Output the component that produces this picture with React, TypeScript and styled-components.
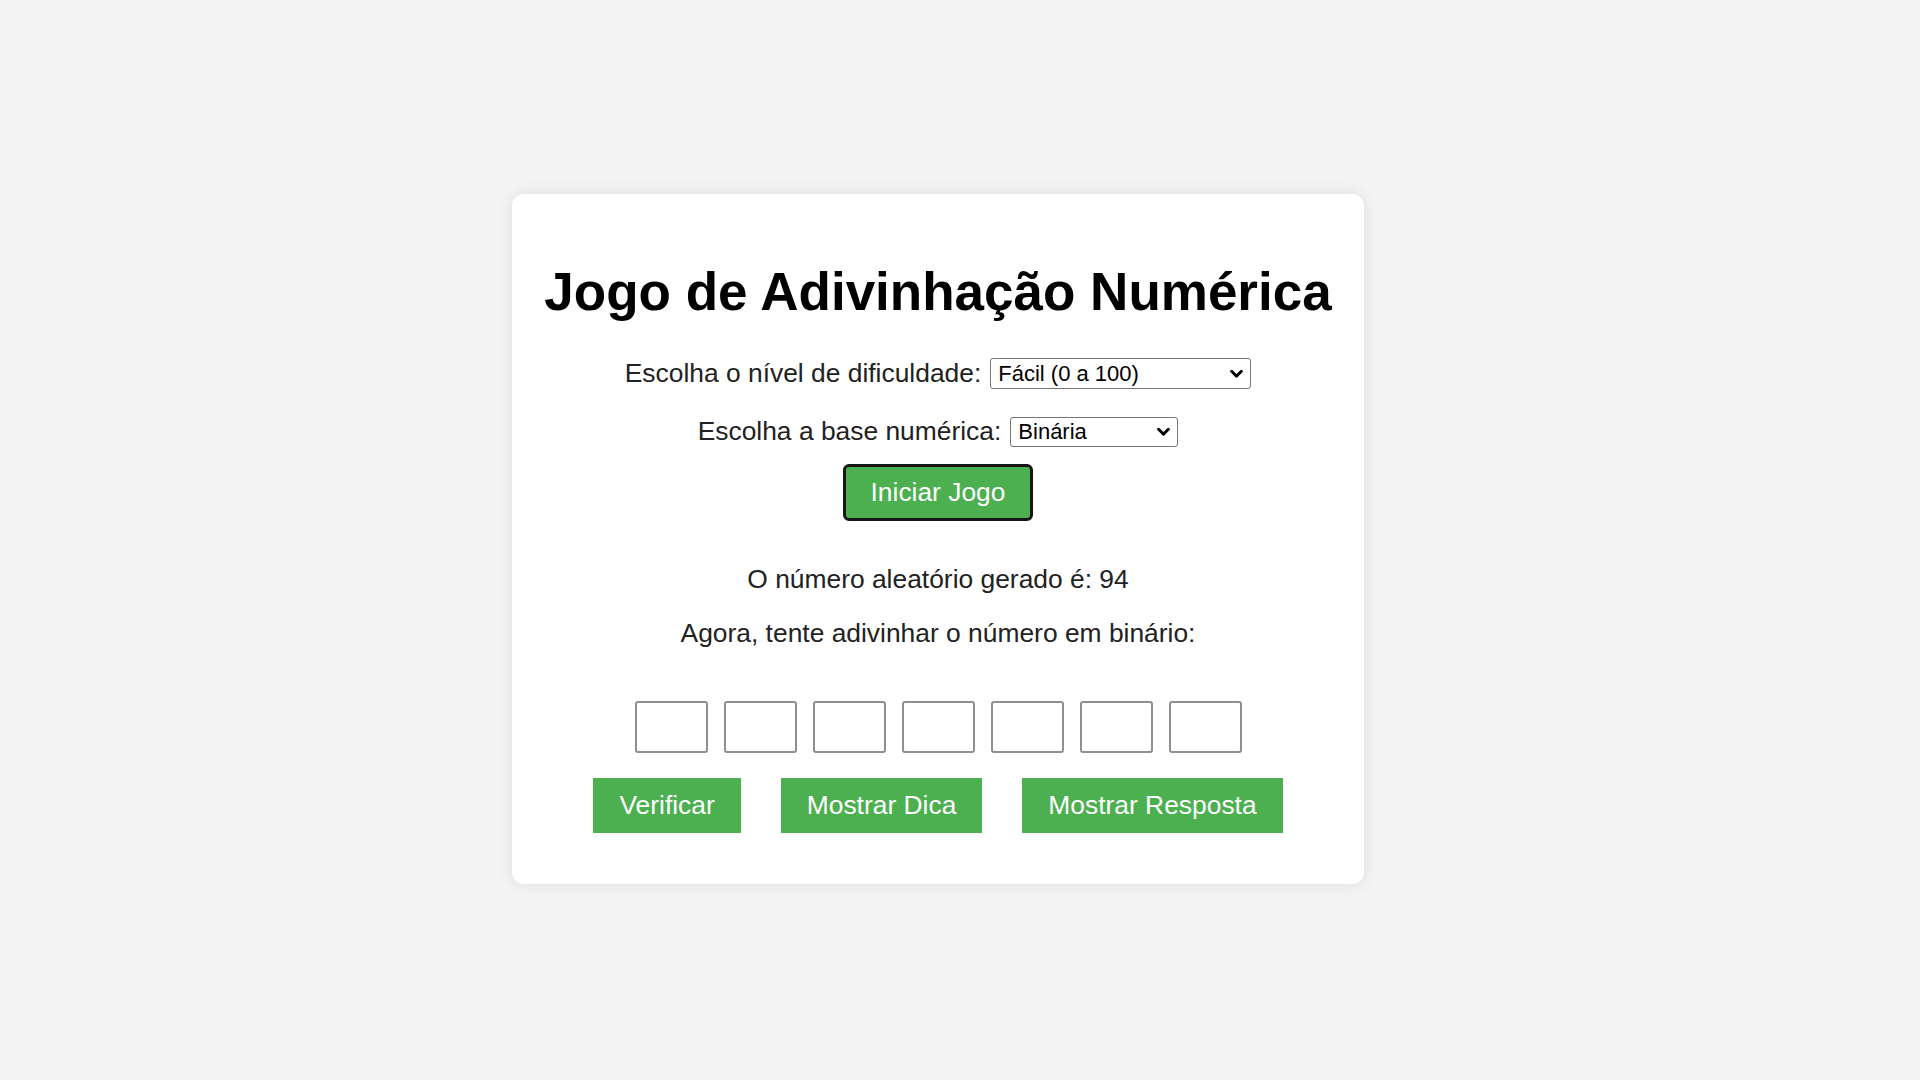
import React, { useState } from "react";
import styled, { createGlobalStyle } from "styled-components";

const GlobalStyle = createGlobalStyle`
  html, body {
    margin: 0;
    padding: 0;
    background: #f4f4f4;
    font-family: "Liberation Sans", Arial, sans-serif;
  }
  * { box-sizing: border-box; }
`;

const Page = styled.div`
  min-height: 100vh;
  display: flex;
  justify-content: center;
  align-items: center;
  padding-right: 44px;
  padding-bottom: 2px;
`;

const Card = styled.div`
  width: 852px;
  background: #ffffff;
  border-radius: 12px;
  box-shadow: 0 0 16px rgba(0, 0, 0, 0.1);
  padding: 32px 20px 51px;
  display: flex;
  flex-direction: column;
  align-items: center;
  text-align: center;
`;

const Title = styled.h1`
  margin: 35.5px 0;
  font-size: 53px;
  font-weight: 700;
  line-height: normal;
  color: #000;
  white-space: nowrap;
`;

const Row = styled.div<{ $mt?: number }>`
  display: flex;
  align-items: center;
  justify-content: center;
  gap: 9px;
  height: 32px;
  margin-top: ${(p) => p.$mt ?? 0}px;
`;

const Label = styled.label`
  font-size: 26.4px;
  line-height: normal;
  color: #222;
  white-space: nowrap;
`;

const SelectWrap = styled.div`
  position: relative;
  display: inline-flex;
`;

const Select = styled.select<{ $w: number; $h: number }>`
  appearance: none;
  -webkit-appearance: none;
  width: ${(p) => p.$w}px;
  height: ${(p) => p.$h}px;
  border: 1px solid #767676;
  border-radius: 3px;
  background: #fff;
  padding: 0 30px 0 7px;
  font-family: "Liberation Sans", Arial, sans-serif;
  font-size: 22px;
  color: #000;
  outline: none;
`;

const Chevron = styled.svg`
  position: absolute;
  right: 8px;
  top: 50%;
  transform: translateY(-50%);
  pointer-events: none;
`;

const StartButton = styled.button`
  margin-top: 16px;
  width: 190px;
  height: 57px;
  border: 3px solid #161616;
  border-radius: 6px;
  background: #4caf50;
  color: #fff;
  font-family: "Liberation Sans", Arial, sans-serif;
  font-size: 26.4px;
  padding: 0;
  cursor: pointer;
`;

const Text = styled.p<{ $mt: number }>`
  margin: ${(p) => p.$mt}px 0 0;
  font-size: 26.4px;
  line-height: normal;
  color: #222;
  white-space: nowrap;
`;

const Digits = styled.div`
  display: flex;
  gap: 16px;
  margin-top: 52px;
`;

const DigitInput = styled.input`
  width: 73px;
  height: 52px;
  border: 2px solid #8f8f8f;
  border-radius: 3px;
  background: #fff;
  font-family: "Liberation Sans", Arial, sans-serif;
  font-size: 26px;
  text-align: center;
  outline: none;
`;

const Actions = styled.div`
  display: flex;
  gap: 40px;
  margin-top: 25px;
`;

const ActionButton = styled.button`
  height: 55px;
  padding: 0 26px;
  border: none;
  border-radius: 0;
  background: #4caf50;
  color: #fff;
  font-family: "Liberation Sans", Arial, sans-serif;
  font-size: 26.4px;
  cursor: pointer;
`;

const ChevronIcon = () => (
  <Chevron width="13" height="9" viewBox="0 0 13 9">
    <path d="M1.6 1.8 L6.5 6.6 L11.4 1.8" fill="none" stroke="#000" strokeWidth="2.9" strokeLinecap="round" strokeLinejoin="round" />
  </Chevron>
);

export default function App() {
  const [digits, setDigits] = useState<string[]>(Array(7).fill(""));
  return (
    <>
      <GlobalStyle />
      <Page>
        <Card>
          <Title>Jogo de Adivinhação Numérica</Title>
          <Row>
            <Label htmlFor="difficulty">Escolha o nível de dificuldade:</Label>
            <SelectWrap>
              <Select id="difficulty" $w={261} $h={31} defaultValue="facil">
                <option value="facil">Fácil (0 a 100)</option>
                <option value="medio">Médio (0 a 1000)</option>
                <option value="dificil">Difícil (0 a 10000)</option>
              </Select>
              <ChevronIcon />
            </SelectWrap>
          </Row>
          <Row $mt={26}>
            <Label htmlFor="base">Escolha a base numérica:</Label>
            <SelectWrap>
              <Select id="base" $w={168} $h={30} defaultValue="binaria">
                <option value="binaria">Binária</option>
                <option value="octal">Octal</option>
                <option value="hexadecimal">Hexadecimal</option>
              </Select>
              <ChevronIcon />
            </SelectWrap>
          </Row>
          <StartButton>Iniciar Jogo</StartButton>
          <Text $mt={42.7}>O número aleatório gerado é: 94</Text>
          <Text $mt={23.4}>Agora, tente adivinhar o número em binário:</Text>
          <Digits>
            {digits.map((d, i) => (
              <DigitInput
                key={i}
                value={d}
                maxLength={1}
                onChange={(e) => {
                  const next = [...digits];
                  next[i] = e.target.value;
                  setDigits(next);
                }}
              />
            ))}
          </Digits>
          <Actions>
            <ActionButton>Verificar</ActionButton>
            <ActionButton>Mostrar Dica</ActionButton>
            <ActionButton>Mostrar Resposta</ActionButton>
          </Actions>
        </Card>
      </Page>
    </>
  );
}
